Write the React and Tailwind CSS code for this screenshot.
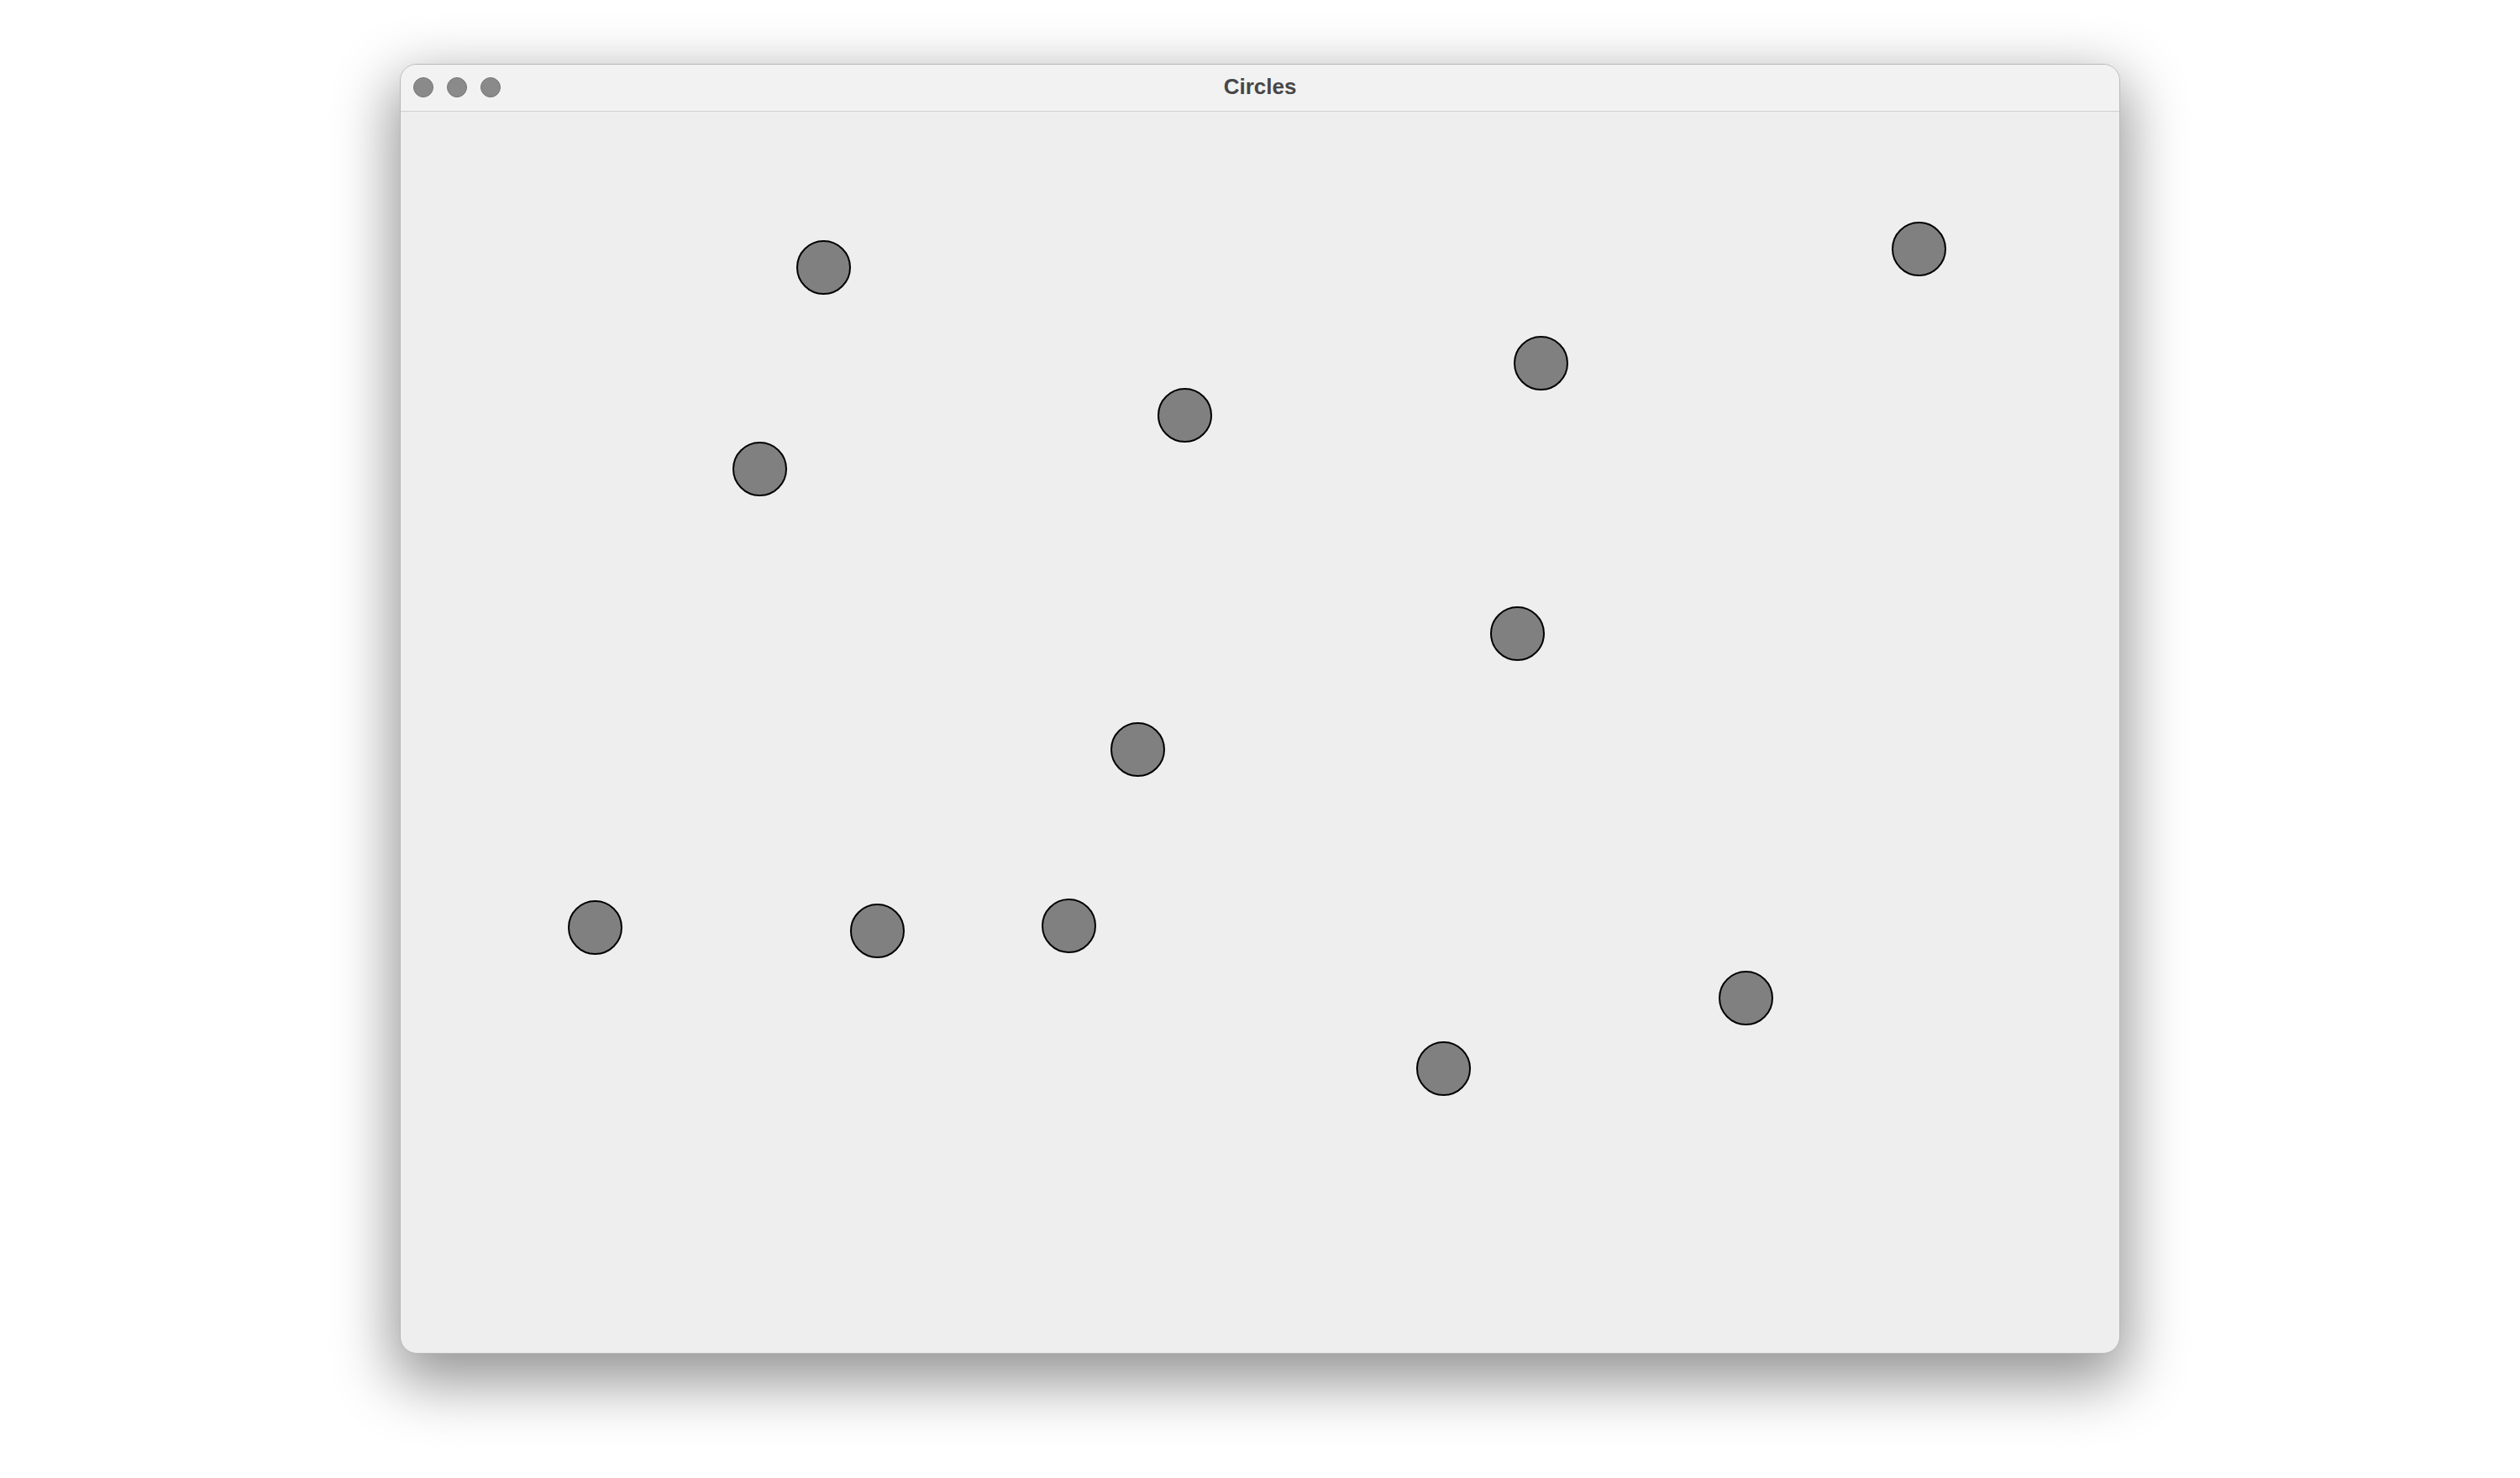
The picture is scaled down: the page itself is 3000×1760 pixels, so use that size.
import React from "react";

const circles = [
  [503, 185],
  [1807, 163],
  [1357, 299],
  [933, 361],
  [427, 425],
  [1329, 621],
  [877, 759],
  [231, 971],
  [567, 975],
  [795, 969],
  [1601, 1055],
  [1241, 1139],
];

export default function App() {
  return (
    <div className="w-[3000px] h-[1760px] bg-white flex justify-center pt-[76px] font-['Liberation_Sans',Arial,sans-serif]">
      <div className="w-[2048px] h-[1536px] rounded-[20px] border border-[#b8b8b8] bg-[#eeeeee] overflow-hidden flex flex-col shadow-[0_26px_70px_8px_rgba(0,0,0,0.42)]">
        <div className="relative h-[56px] shrink-0 bg-[#f2f2f2] border-b border-[#d0d0d0] flex items-center justify-center pb-[3px]">
          <div className="absolute left-[15px] top-[15px] flex gap-[16px]">
            <div className="w-[24px] h-[24px] rounded-full bg-[#8a8a8a] border border-[#767676]" />
            <div className="w-[24px] h-[24px] rounded-full bg-[#8a8a8a] border border-[#767676]" />
            <div className="w-[24px] h-[24px] rounded-full bg-[#8a8a8a] border border-[#767676]" />
          </div>
          <span className="text-[26px] font-bold text-[#474747] leading-none">Circles</span>
        </div>
        <div className="relative flex-1">
          {circles.map(([x, y], i) => (
            <div
              key={i}
              className="absolute w-[65px] h-[65px] rounded-full bg-[#808080] border-2 border-black"
              style={{ left: x - 32.5, top: y - 32.5 }}
            />
          ))}
        </div>
      </div>
    </div>
  );
}
